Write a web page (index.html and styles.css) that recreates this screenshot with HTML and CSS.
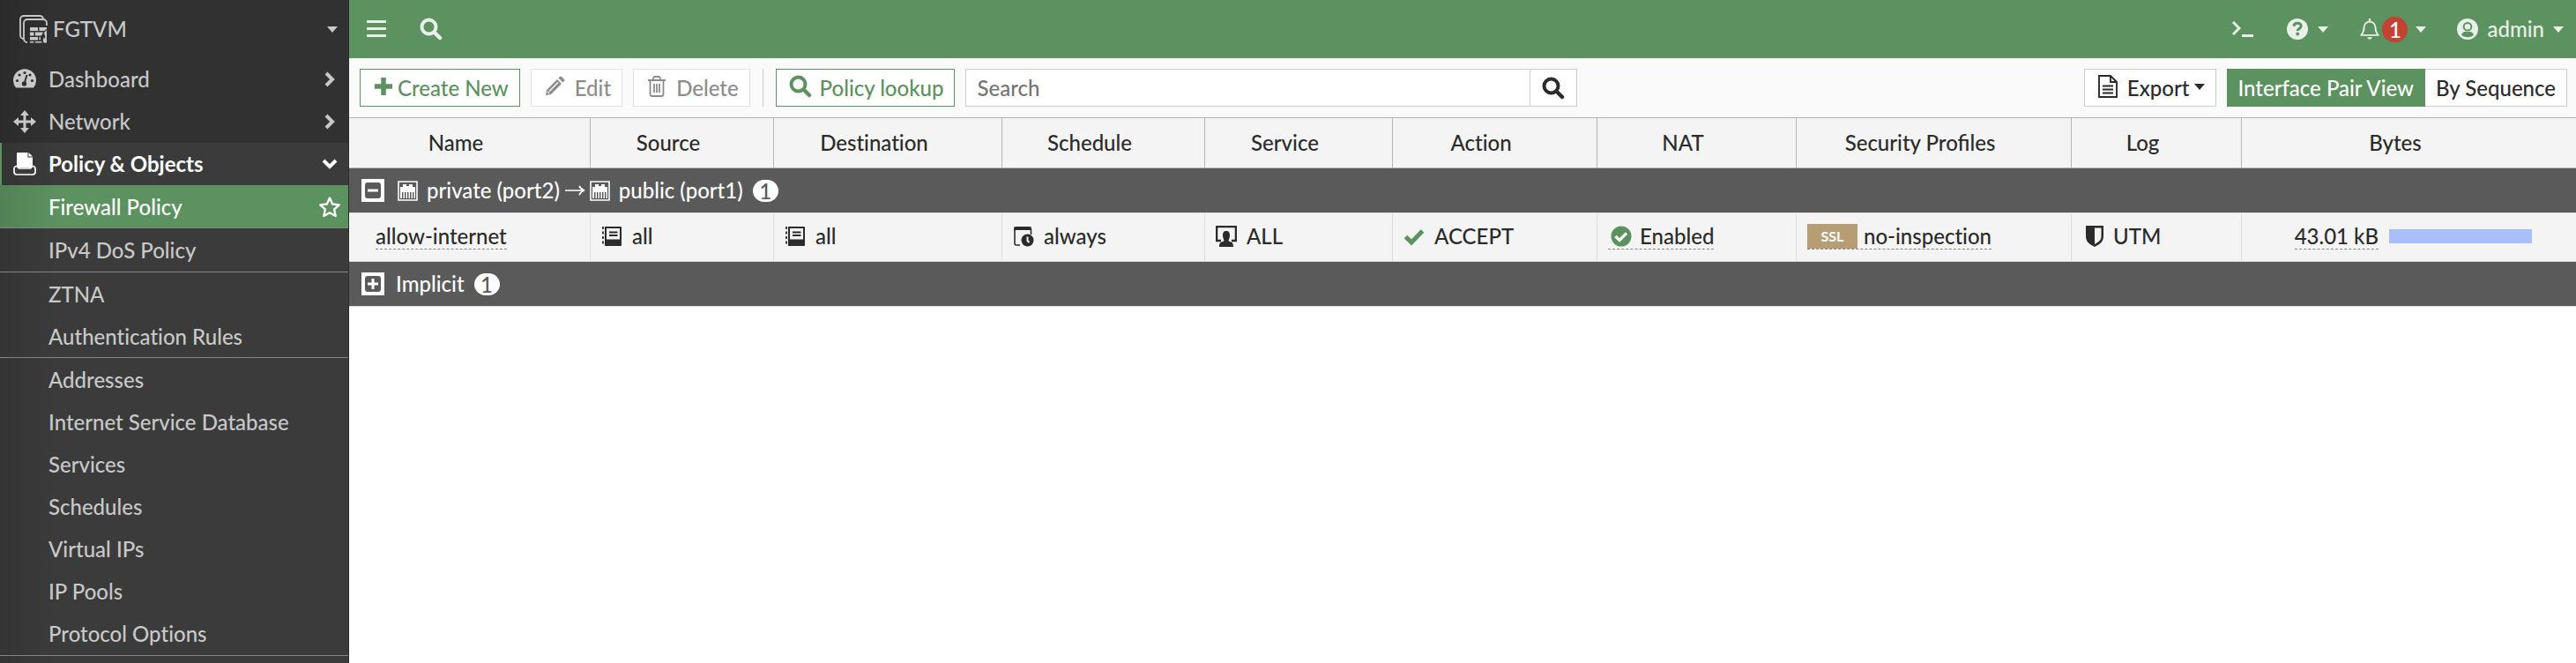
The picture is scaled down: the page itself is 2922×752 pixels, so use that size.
FILE: index.html
```html
<!DOCTYPE html>
<html lang="en">
<head>
<meta charset="utf-8">
<title>FGTVM - Firewall Policy</title>
<link rel="stylesheet" href="styles.css">
</head>
<body>
<svg class="sprite" aria-hidden="true">
  <symbol id="search" viewBox="0 0 26 26"><circle cx="10.500" cy="10.500" r="8" fill="none" stroke="currentColor" stroke-width="4"/><path d="M16.500 16.500L23 23" stroke="currentColor" stroke-width="4.500" stroke-linecap="round"/></symbol>
  <symbol id="caret" viewBox="0 0 12 7"><path d="M0 0h12L6 7z" fill="currentColor"/></symbol>
  <symbol id="chev" viewBox="0 0 12 18"><path d="M2 2l7 7-7 7" fill="none" stroke="currentColor" stroke-width="4"/></symbol>
  <symbol id="port" viewBox="0 0 23 23"><path d="M1 1h21v21H1z" fill="none" stroke="currentColor" stroke-width="1.600"/><path d="M3 20V7h3V4h4v2h3V4h4v3h3v13h-1.500v-7h-1.500v7h-1.500v-7H14v7h-1.500v-7H11v7H9.500v-7H8v7H6.500v-7H5v7z" fill="currentColor"/></symbol>
  <symbol id="book" viewBox="0 0 24 24"><path d="M4 1h18a1 1 0 0 1 1 1v20a1 1 0 0 1-1 1H4zM6 3v12.500H21V3z" fill="currentColor" fill-rule="evenodd"/><path d="M9 7.500h9.500M9 11h9.500" stroke="currentColor" stroke-width="1.800"/><path d="M2 1v22" stroke="currentColor" stroke-width="1.800" stroke-dasharray="3 2.500"/></symbol>
</svg>
<div class="app">
  <aside class="side">
    <button class="brand" type="button">
      <svg class="logo" viewBox="0 0 32 32"><g fill="none" stroke="currentColor" stroke-width="1.800"><path d="M5 27a4 4 0 0 1-4-4V5a4 4 0 0 1 4-4h18a4 4 0 0 1 4 3"/><path d="M9 31a4 4 0 0 1-4-4V9a4 4 0 0 1 4-4h18a4 4 0 0 1 4 4v3"/></g><path d="M12 14h9v4h-9zM22.500 14H31v2l-3 2h-5.500zM12 19.500h4.500v4H12zM18 19.500h9L25 23.500h-7zM12 25h9v3.500h-9zM12 30h4.500v1.500H12zM18 30h7l1 1.500h-8zM31 17v14.500h-3c-2-2-1-4.500 0-6.500 0 1 .5 2 1 2 1-3-1-5-1-7zM22.500 25H24v3.500h-1.500z" fill="currentColor"/></svg>
      <span class="grow">FGTVM</span>
      <svg class="caret"><use href="#caret"/></svg>
    </button>
    <nav>
      <a class="item" href="#"><svg class="mi" viewBox="0 0 26 26"><path d="M3 22.500A13 13 0 1 1 23 22.500z" fill="currentColor"/><g fill="#313131"><circle cx="4.500" cy="14.500" r="1.600"/><circle cx="7" cy="8" r="1.600"/><circle cx="13" cy="5.500" r="1.600"/><circle cx="21.500" cy="14.500" r="1.600"/><circle cx="19" cy="8" r="1.600"/><circle cx="12.500" cy="18" r="2.700"/></g><path d="M12.500 18L15.500 8" stroke="#313131" stroke-width="2"/></svg><span class="grow">Dashboard</span><svg class="chev"><use href="#chev"/></svg></a>
      <a class="item" href="#"><svg class="mi" viewBox="0 0 26 26"><path d="M13 3v20M3 13h20" stroke="currentColor" stroke-width="3"/><path d="M13 0l5 6H8zM13 26l5-6H8zM0 13l6-5v10zM26 13l-6-5v10z" fill="currentColor"/></svg><span class="grow">Network</span><svg class="chev"><use href="#chev"/></svg></a>
      <a class="item open" href="#"><svg class="mi" viewBox="0 0 26 26"><path d="M4 17V1a1 1 0 0 1 1-1h11.500v5.500H22V17z" fill="currentColor"/><path d="M17.500 0L22 4.500h-4.500z" fill="currentColor"/><path d="M4 15.500c-2 0-3 1-3 3V22c0 2 1 3 3 3h18c2 0 3-1 3-3v-3.500c0-2-1-3-3-3-1.500 0-1 2.500-3.500 2.500h-11C5 18 5.500 15.500 4 15.500z" fill="#3b3b3b" stroke="currentColor" stroke-width="1.700"/></svg><span class="grow">Policy &amp; Objects</span><svg class="chev down"><use href="#chev"/></svg></a>
      <div class="group"><a class="sub current" href="#"><span class="grow">Firewall Policy</span><svg class="star" viewBox="0 0 26 26"><path d="M13 2.500l3.200 7 7.600.8-5.700 5.100 1.600 7.600L13 19.200 6.300 23l1.600-7.600-5.700-5.100 7.600-.8z" fill="none" stroke="currentColor" stroke-width="2.300" stroke-linejoin="round"/></svg></a></div>
      <div class="group spaced"><a class="sub" href="#">IPv4 DoS Policy</a></div>
      <div class="group"><a class="sub" href="#">ZTNA</a><a class="sub" href="#">Authentication Rules</a></div>
      <div class="group spaced"><a class="sub" href="#">Addresses</a><a class="sub" href="#">Internet Service Database</a><a class="sub" href="#">Services</a><a class="sub" href="#">Schedules</a><a class="sub" href="#">Virtual IPs</a><a class="sub" href="#">IP Pools</a><a class="sub" href="#">Protocol Options</a></div>
      <div class="group rest"></div>
    </nav>
  </aside>
  <main class="main">
    <header class="top">
      <button class="tb" type="button" aria-label="Toggle menu"><svg class="burger" viewBox="0 0 22 22"><path d="M0 2.500h22M0 10.500h22M0 18.500h22" stroke="currentColor" stroke-width="3"/></svg></button>
      <button class="tb grow" type="button" aria-label="Search"><svg class="s26"><use href="#search"/></svg></button>
      <button class="tb" type="button" aria-label="CLI console"><svg class="term" viewBox="0 0 26 20"><path d="M2 2l7 7-7 7" fill="none" stroke="currentColor" stroke-width="3"/><path d="M12 17.500h13" stroke="currentColor" stroke-width="3"/></svg></button>
      <button class="tb help" type="button" aria-label="Help"><svg class="s24" viewBox="0 0 26 26"><circle cx="13" cy="13" r="13" fill="currentColor"/><path d="M8.500 9.500c.5-5 9-5 9-.3 0 3.300-4.300 3-4.300 6" fill="none" stroke="#5c9160" stroke-width="3.200"/><circle cx="13.200" cy="19" r="2.100" fill="#5c9160"/></svg><svg class="caret"><use href="#caret"/></svg></button>
      <button class="tb bell" type="button" aria-label="Notifications"><svg class="s24" viewBox="0 0 26 26"><path d="M2.500 20.500c2.500-3 3.500-5 3.500-9.500 0-4 3-7 7-7s7 3 7 7c0 4.500 1 6.500 3.500 9.500z" fill="none" stroke="currentColor" stroke-width="2" stroke-linejoin="round"/><path d="M13 0v4" stroke="currentColor" stroke-width="2.500"/><path d="M10 23h6c-.5 3.500-5.500 3.500-6 0z" fill="currentColor"/></svg><span class="alert">1</span><svg class="caret"><use href="#caret"/></svg></button>
      <button class="tb user" type="button"><svg class="s24" viewBox="0 0 26 26"><circle cx="13" cy="13" r="13" fill="currentColor"/><circle cx="13" cy="10" r="4.700" fill="none" stroke="#5c9160" stroke-width="2.200"/><path d="M5.500 20c2-5 4.500-3.500 7.500-3.500s5.500-1.500 7.500 3.500c-3 4-12 4-15 0z" fill="#5c9160"/></svg><span>admin</span><svg class="caret"><use href="#caret"/></svg></button>
    </header>
    <div class="tools">
      <button class="btn green create" type="button"><svg class="plus" viewBox="0 0 20 20"><path d="M10 0v20M0 10h20" stroke="currentColor" stroke-width="5.500"/></svg>Create New</button>
      <button class="btn edit" type="button" disabled><svg class="s24" viewBox="0 0 24 24"><path d="M2 22l1-6L15 4l5 5L8 21zM16.500 2.500l2-2c1-.6 5.500 4 5 5l-2 2z" fill="currentColor"/><path d="M6 17.500L16 7.500M4 18l2 2" stroke="#fff" stroke-width="1.200"/></svg>Edit</button>
      <button class="btn delete" type="button" disabled><svg class="s24" viewBox="0 0 24 24"><path d="M2 5h20M8 4.500C8 1 9 1 10 1h4c1 0 2 0 2 3.500M4.500 5v15.500c0 2 .5 2.500 2 2.500h11c1.500 0 2-.5 2-2.500V5M9 9v10M12 9v10M15 9v10" fill="none" stroke="currentColor" stroke-width="1.800"/></svg>Delete</button>
      <span class="rule"></span>
      <button class="btn green lookup" type="button"><svg class="s26"><use href="#search"/></svg>Policy lookup</button>
      <form class="find"><input type="text" placeholder="Search" aria-label="Search policies"><button type="button" aria-label="Run search"><svg class="s26"><use href="#search"/></svg></button></form>
      <span class="grow"></span>
      <button class="btn export" type="button"><svg class="doc" viewBox="0 0 22 26"><path d="M1 1h13l7 7v17H1zM14 1v7h7M5 12.500h12M5 16.500h12M5 20.500h12" fill="none" stroke="currentColor" stroke-width="1.900"/></svg>Export<svg class="caret"><use href="#caret"/></svg></button>
      <div class="views"><button class="on" type="button">Interface Pair View</button><button type="button">By Sequence</button></div>
    </div>
    <table class="grid">
      <colgroup><col class="c-name"><col class="c-src"><col class="c-dst"><col class="c-sch"><col class="c-svc"><col class="c-act"><col class="c-nat"><col class="c-sec"><col class="c-log"><col class="c-byt"></colgroup>
      <thead><tr><th>Name</th><th>Source</th><th>Destination</th><th>Schedule</th><th>Service</th><th>Action</th><th>NAT</th><th class="liga">Security Profiles</th><th>Log</th><th>Bytes</th></tr></thead>
      <tbody>
        <tr class="section"><td colspan="10"><div class="line"><button class="fold" type="button" aria-label="Collapse"><svg viewBox="0 0 26 26"><path d="M0 0h26v26H0z" fill="#fff"/><rect x="4" y="4" width="18" height="18" rx="3" fill="#5a5a5a"/><path d="M7 13h12" stroke="#fff" stroke-width="3"/></svg></button><svg class="port first"><use href="#port"/></svg><span>private (port2)</span><svg class="arrow" viewBox="0 0 24 14"><path d="M0 7h22M16 2q2 4 6 5-4 1-6 5" fill="none" stroke="currentColor" stroke-width="1.700"/></svg><svg class="port"><use href="#port"/></svg><span>public (port1)</span><span class="count">1</span></div></td></tr>
        <tr class="policy">
          <td class="name"><a class="cell dash" href="#">allow-internet</a></td>
          <td><div class="cell"><svg class="s24"><use href="#book"/></svg>all</div></td>
          <td><div class="cell"><svg class="s24"><use href="#book"/></svg>all</div></td>
          <td><div class="cell"><svg class="s24" viewBox="0 0 24 24"><path d="M1 5h20V3q0-2-2-2H3Q1 1 1 3z" fill="currentColor"/><path d="M2 4v16q0 2 2 2h4M20.500 4v6" fill="none" stroke="currentColor" stroke-width="1.600"/><circle cx="16.500" cy="16.500" r="7" fill="currentColor"/><path d="M16.500 12.500v4.500l2 2" fill="none" stroke="#f4f4f4" stroke-width="2"/></svg>always</div></td>
          <td><div class="cell"><svg class="s24" viewBox="0 0 24 24"><path d="M6 17H1V1h22v16h-5" fill="none" stroke="currentColor" stroke-width="2.600"/><path d="M12 6c3 0 4 2 4 5s-1.500 5-1.500 6.500c3 1 5.500 1 5.500 6.500H4c0-5.500 2.500-5.500 5.500-6.500C9.500 16 8 14 8 11s1-5 4-5z" fill="currentColor"/></svg>ALL</div></td>
          <td><div class="cell"><svg class="s24 ok" viewBox="0 0 24 24"><path d="M2.500 12.500l6.500 6.500L21.500 6" fill="none" stroke="currentColor" stroke-width="5"/></svg>ACCEPT</div></td>
          <td><a class="cell dash nat" href="#"><svg class="s24 ok" viewBox="0 0 24 24"><circle cx="12" cy="12" r="11.500" fill="currentColor"/><path d="M5.500 12l4.500 4.500 8-8" fill="none" stroke="#fff" stroke-width="3.200"/></svg>Enabled</a></td>
          <td><a class="cell dash sec" href="#"><span class="ssl">SSL</span>no-inspection</a></td>
          <td><div class="cell log"><svg class="shield" viewBox="0 0 20 24"><path d="M0 0h20v12c0 6-4 9-10 12C4 21 0 18 0 12zM10 2.500v18.500c5-2.500 7.500-5 7.500-9V2.500z" fill="currentColor" fill-rule="evenodd"/></svg>UTM</div></td>
          <td><div class="cell bytes"><a class="cell dash" href="#">43.01 kB</a><span class="bar"></span></div></td>
        </tr>
        <tr class="section"><td colspan="10"><div class="line"><button class="fold" type="button" aria-label="Expand"><svg viewBox="0 0 26 26"><path d="M0 0h26v26H0z" fill="#fff"/><rect x="4" y="4" width="18" height="18" rx="3" fill="#5a5a5a"/><path d="M7 13h12M13 7v12" stroke="#fff" stroke-width="3"/></svg></button><span class="label">Implicit</span><span class="count">1</span></div></td></tr>
      </tbody>
    </table>
  </main>
</div>
</body>
</html>
```

FILE: styles.css
```css
* { box-sizing: border-box; }
body { margin: 0; font: 500 24px/32px Lato, "Open Sans", sans-serif; font-variant-ligatures: none; color: #2b2b2b; background: #fff; overflow: hidden; }
button, input { font: inherit; font-variant-ligatures: none; color: inherit; margin: 0; border: 0; padding: 0; background: none; }
a { color: inherit; text-decoration: none; }
svg { display: block; flex: none; }
.sprite { position: absolute; width: 0; height: 0; }
.grow { flex: 1; text-align: left; }
.liga { font-variant-ligatures: common-ligatures; }
.app { display: flex; height: 100vh; }
.s24 { width: 24px; height: 24px; }
.s26 { width: 26px; height: 26px; }
.caret { width: 12px; height: 7px; }

/* Sidebar */
.side { width: 396px; flex: none; display: flex; flex-direction: column; overflow: hidden; color: #c8c8c8; border-right: 1px solid #2b2b2b; background: linear-gradient(90deg, #2b2b2b, #313131 66px); }
.brand { display: flex; align-items: center; height: 66px; padding: 0 12px 0 22px; gap: 6px; }
.logo { width: 32px; height: 32px; }
nav { flex: 1; display: flex; flex-direction: column; }
.item { display: flex; align-items: center; height: 48px; padding: 0 15px; flex: none; }
.mi { width: 26px; height: 26px; margin-right: 14px; }
.chev { width: 12px; height: 18px; }
.down { transform: rotate(90deg); }
.open { color: #fff; font-weight: 700; background: linear-gradient(90deg, #343434, #3b3b3b 66px); border-left: 2px solid #5c9160; padding-left: 13px; }
.group { background: linear-gradient(90deg, #343434, #3b3b3b 66px); flex: none; }
.group + .group { border-top: 1px solid #858585; }
.spaced { padding-bottom: 1px; }
.rest { flex: 1; }
.sub { display: flex; align-items: center; height: 48px; padding: 2px 8px 0 55px; }
.current { color: #fff; background: linear-gradient(90deg, #528256, #5c9160 66px); }
.star { width: 26px; height: 26px; }

/* Top bar */
.main { flex: 1; min-width: 0; }
.top { height: 66px; display: flex; align-items: center; padding: 0 14px 0 20px; background: #5c9160; color: #e8f0e8; }
.tb { display: flex; align-items: center; }
.burger { width: 22px; height: 22px; margin-right: 38px; }
.term { width: 26px; height: 20px; }
.help { margin-left: 37px; gap: 11px; }
.bell { margin-left: 35px; }
.bell .caret { margin-left: 9px; }
.alert { width: 29px; height: 29px; border-radius: 50%; background: #c34333; color: #fff; line-height: 29px; text-align: center; margin-left: 2px; }
.user { margin-left: 35px; gap: 10px; }

/* Toolbar */
.tools { display: flex; align-items: center; height: 68px; padding: 0 10px 0 12px; background: #fafafa; border-bottom: 1px solid #b5b5b5; }
.btn { display: flex; align-items: center; height: 43px; border: 1px solid #ccc; background: #fff; padding: 0 12px; white-space: nowrap; }
.btn svg { margin-bottom: 3px; }
.btn:disabled { color: #8c8c8c; border-color: #e2e2e2; }
.green { color: #5c9160; border-color: #5c9160; }
.create { padding-left: 16px; gap: 6px; }
.plus { width: 20px; height: 20px; }
.edit, .delete { margin-left: 12px; padding-left: 14px; gap: 11px; }
.delete { gap: 10px; }
.rule { width: 1px; height: 43px; background: #ccc; margin: 0 14px; }
.lookup { gap: 9px; padding-left: 14px; }
.find { display: flex; width: 694px; height: 43px; margin-left: 12px; border: 1px solid #ccc; background: #fff; }
.find input { flex: 1; min-width: 0; padding: 0 12px; outline: 0; }
.find input::placeholder { color: #757575; opacity: 1; }
.find button { width: 53px; border-left: 1px solid #ccc; display: flex; align-items: center; justify-content: center; }
.export { margin-right: 12px; padding-left: 15px; }
.doc { width: 22px; height: 26px; margin-right: 11px; }
.export .caret { margin-left: 6px; }
.views { display: flex; height: 43px; }
.views button { padding: 0 12px; border: 1px solid #ccc; border-left: 0; background: #fff; }
.views .on { background: #5c9160; border-color: #5c9160; color: #fff; }

/* Policy table */
.grid { width: 100%; table-layout: fixed; border-collapse: separate; border-spacing: 0; }
.c-name { width: 274px; }
.c-src { width: 208px; }
.c-dst { width: 259px; }
.c-sch { width: 230px; }
.c-svc { width: 213px; }
.c-act { width: 232px; }
.c-nat { width: 226px; }
.c-sec { width: 312px; }
.c-log { width: 193px; }
th { height: 57px; padding: 0 31px 0 0; font-weight: 500; background: #f4f4f4; border-bottom: 1px solid #b5b5b5; border-right: 1px solid #b5b5b5; }
td { padding: 0 12px; }
th:last-child, .policy td:last-child { border-right: 0; }
.section td { height: 51px; background: #5a5a5a; color: #fff; border-bottom: 1px solid #ddd; padding: 0 14px; }
.policy td { height: 55px; background: #f4f4f4; border-right: 1px solid #ddd; border-bottom: 1px solid #ddd; padding-bottom: 2px; }
.policy .name { padding-left: 30px; }
.line, .cell { display: flex; align-items: center; }
.fold, .fold svg { width: 26px; height: 26px; }
.port { width: 23px; height: 23px; margin-right: 10px; }
.first { margin-left: 15px; }
.arrow { width: 24px; height: 14px; margin: 0 4px 0 6px; }
.label { margin-left: 13px; }
.count { min-width: 29px; height: 25px; line-height: 25px; border-radius: 13px; background: #fff; color: #5a5a5a; text-align: center; margin-left: 11px; }
.cell { gap: 11px; }
.ok { color: #5c9160; }
.dash { width: fit-content; height: 29px; line-height: 28px; border-bottom: 1px dashed #888; }
.nat { padding-left: 3px; gap: 9px; }
.sec { gap: 7px; }
.ssl { width: 57px; height: 28px; background: #b79d74; color: #fff; font-size: 16px; line-height: 28px; font-weight: 700; text-align: center; }
.log { padding-left: 4px; }
.shield { width: 20px; height: 24px; }
.bytes { justify-content: flex-end; gap: 12px; padding-right: 38px; }
.bar { width: 162px; height: 16px; background: #a9bff9; }
```
